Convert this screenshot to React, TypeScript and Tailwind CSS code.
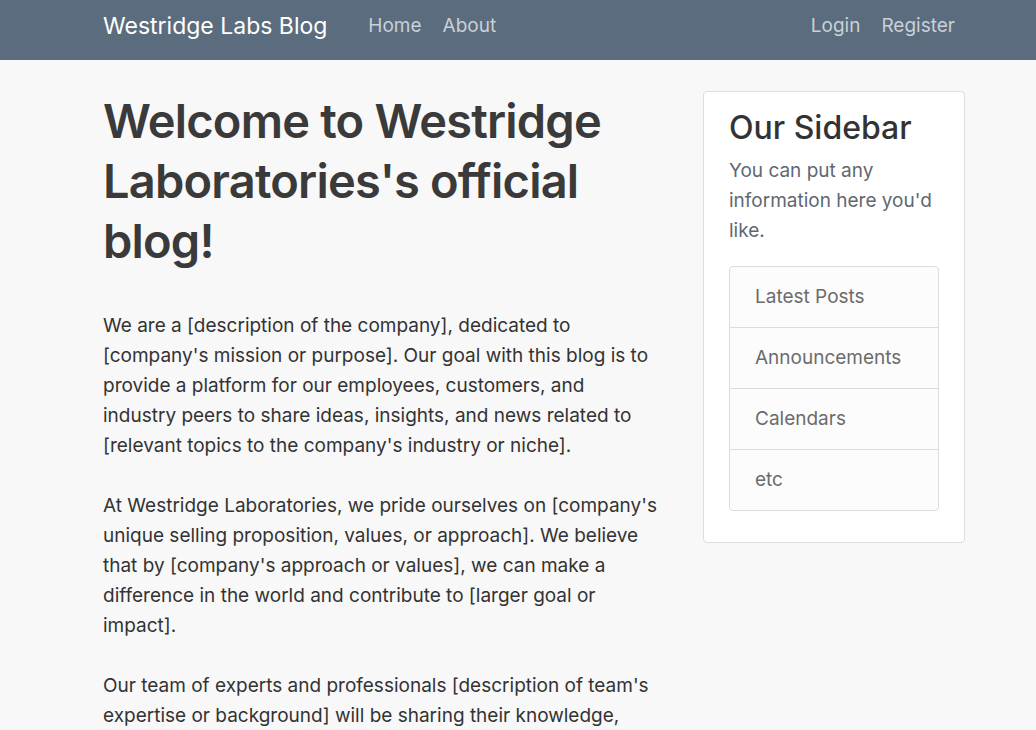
export default function App() {
  const font = { fontFamily: 'Inter, "Noto Sans", sans-serif' }
  const links = ['Latest Posts', 'Announcements', 'Calendars', 'etc']
  return (
    <div className="min-h-screen bg-[#f8f8f8] font-['Inter',sans-serif]" style={font}>
      <nav className="h-[60px] bg-[#5b6c7e]">
        <div className="ml-[103px] flex h-full w-[862px] items-center">
          <a className="text-[23px] leading-none text-white -mt-[8px]">Westridge Labs Blog</a>
          <div className="ml-[41px] flex gap-[21px] text-[19px] text-[#c9d0d7] -mt-[8px]">
            <a>Home</a>
            <a>About</a>
          </div>
          <div className="ml-auto mr-[10px] flex gap-[21px] text-[19px] text-[#c9d0d7] -mt-[8px]">
            <a>Login</a>
            <a>Register</a>
          </div>
        </div>
      </nav>

      <div className="ml-[103px] flex w-[862px] gap-[35px] pt-[31px]">
        <main className="w-[565px] text-[#333]">
          <h1 className="text-[47px] font-semibold leading-[60px] tracking-[-0.8px] text-[#3a3a3a]">
            Welcome to Westridge Laboratories's official blog!
          </h1>
          <div className="mt-[40px] w-[557px] space-y-[30px] text-[19px] leading-[30px] text-[#333]">
            <p>
              We are a [description of the company], dedicated to [company's mission or purpose]. Our goal with this
              blog is to provide a platform for our employees, customers, and industry peers to share ideas, insights,
              and news related to [relevant topics to the company's industry or niche].
            </p>
            <p>
              At Westridge Laboratories, we pride ourselves on [company's unique selling proposition, values, or
              approach]. We believe that by [company's approach or values], we can make a difference in the world and
              contribute to [larger goal or impact].
            </p>
            <p>
              Our team of experts and professionals [description of team's expertise or background] will be sharing
              their knowledge, insights, and experiences on a wide range of topics.
            </p>
          </div>
        </main>

        <aside className="w-[262px] self-start">
          <div className="rounded-[4px] border border-[#dedede] bg-white px-[25px] pb-[31px] pt-[14px]">
            <h3 className="text-[32px] font-medium leading-[44px] text-[#333]">Our Sidebar</h3>
            <p className="mt-[6px] text-[19px] leading-[30px] text-[#5f6870]">
              You can put any information here you'd like.
            </p>
            <ul className="mt-[20px] overflow-hidden rounded-[4px] border border-[#dcdcdc] bg-[#fcfcfc]">
              {links.map((l, i) => (
                <li
                  key={l}
                  className={`px-[25px] text-[19px] leading-[60px] text-[#6b6b6b] ${i > 0 ? 'border-t border-[#dcdcdc]' : ''}`}
                >
                  {l}
                </li>
              ))}
            </ul>
          </div>
        </aside>
      </div>
    </div>
  )
}
